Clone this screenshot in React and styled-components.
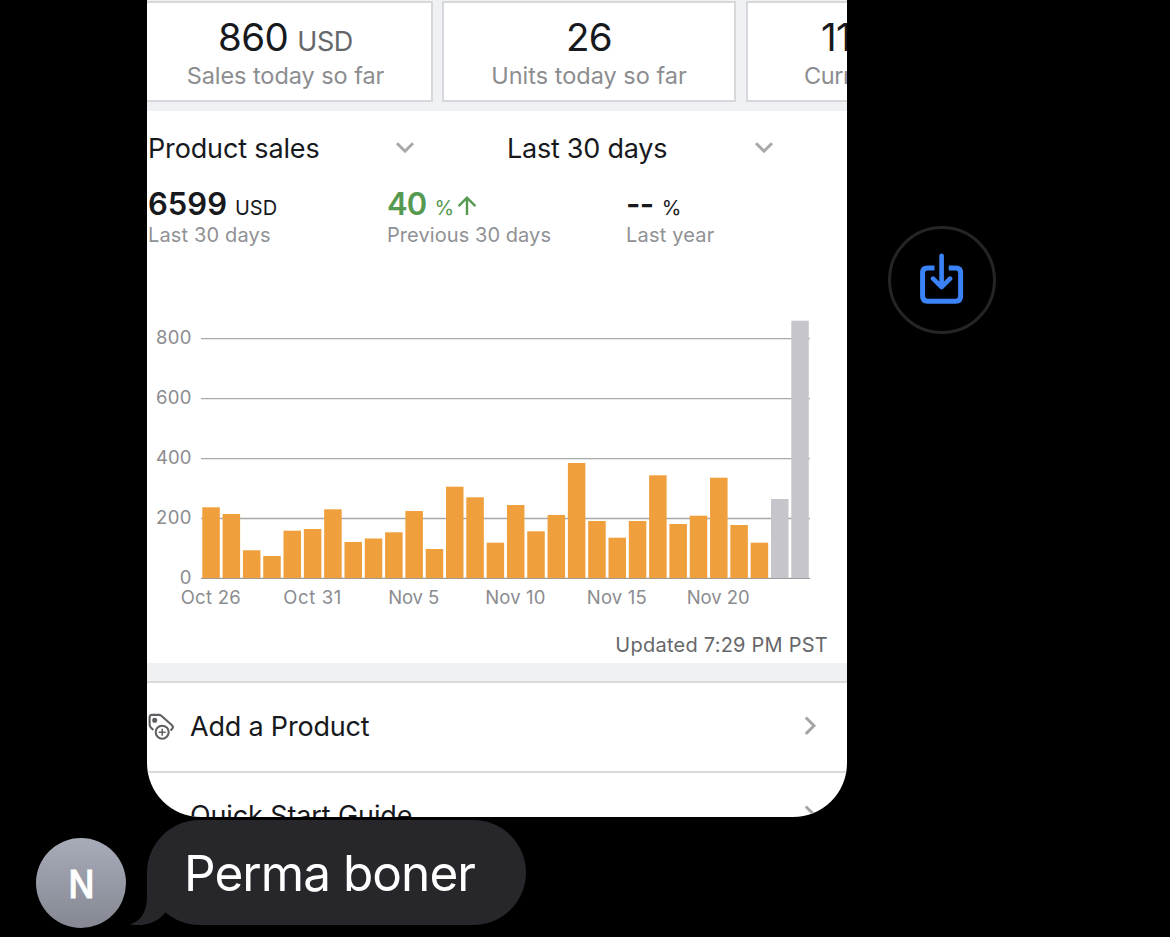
import React from "react";
import styled, { createGlobalStyle } from "styled-components";

const Global = createGlobalStyle`
  * { box-sizing: border-box; }
  html, body { margin: 0; background: #000; }
  body { font-family: Inter, "Liberation Sans", sans-serif; overflow: hidden; }
`;

const Screen = styled.main`
  width: 1170px;
  height: 937px;
  background: #000;
  overflow: hidden;
  display: flex;
  flex-direction: column;
`;

const MediaRow = styled.div`
  display: flex;
  align-items: flex-start;
  padding-left: 147px;
  height: 817px;
`;

const Attachment = styled.section`
  width: 700px;
  height: 817px;
  flex: none;
  background: #fff;
  border-radius: 0 0 54px 54px;
  overflow: hidden;
`;

const Text = styled.span`
  display: block;
  white-space: pre;
  font-size: ${(p) => p.$size}px;
  line-height: ${(p) => p.$line || 30}px;
  font-weight: ${(p) => p.$weight || 400};
  letter-spacing: ${(p) => p.$track || 0}px;
  color: ${(p) => p.$color || "#17191d"};
`;

const StatStrip = styled.div`
  display: flex;
  gap: 10px;
  height: 111px;
  padding-top: 1px;
  margin-left: -9px;
  background: #f0f1f4;
`;

const StatCard = styled.div`
  flex: none;
  width: 294px;
  height: 101px;
  border: 2px solid #d7d8da;
  background: #fff;
  padding: 14px 0 0 ${(p) => p.$indent || 0}px;
  display: flex;
  flex-direction: column;
  align-items: ${(p) => (p.$indent ? "flex-start" : "center")};

  &:first-child { width: 295px; margin-right: -1px; }
`;

const StatValue = styled.div`
  display: flex;
  align-items: baseline;
  gap: 9px;
  height: 41px;
  padding-left: ${(p) => p.$shift || 0}px;
`;

const Selectors = styled.div`
  display: flex;
  height: 74px;
  padding-top: 1px;
`;

const Selector = styled.div`
  flex: none;
  width: 359px;
  display: flex;
  align-items: center;
  justify-content: space-between;
  padding: 0 91px 0 1px;

  svg { margin-bottom: 2px; }
`;

const Metrics = styled.div`
  display: flex;
  height: 75px;
  padding-top: 4px;
`;

const Metric = styled.div`
  flex: none;
  width: 239px;
  padding-left: 1px;
`;

const MetricValue = styled.div`
  display: flex;
  align-items: baseline;
  height: 31px;
  gap: 8px;

  svg { margin-left: -5px; }
`;

const ChartBox = styled.svg`
  display: block;
  width: 700px;
  height: 350px;
  text { font-family: Inter, sans-serif; font-size: 18.5px; fill: #8b8c8f; }
`;

const Updated = styled.div`
  display: flex;
  justify-content: flex-end;
  height: 53px;
  padding: 20px 19px 0 0;
`;

const Divider = styled.div`
  height: 20px;
  background: #f0f1f3;
  border-bottom: 2px solid #d9dadb;
`;

const MenuRow = styled.div`
  display: flex;
  align-items: center;
  height: ${(p) => p.$height || 90}px;
  border-bottom: 2px solid #d9dadb;
  padding: 0 30px 0 1px;

  > svg { margin-bottom: 3px; }
`;

const MenuIcon = styled.span`
  width: 42px;
  height: 28px;
`;

const MenuLabel = styled.div`
  flex: 1;
`;

const SaveButton = styled.button`
  margin: 226px 0 0 41px;
  width: 108px;
  height: 108px;
  border: 3px solid #252526;
  border-radius: 50%;
  background: #000;
  padding: 0;
  display: flex;
  align-items: center;
  justify-content: center;
`;

const MessageRow = styled.div`
  display: flex;
  padding: 3px 0 0 36px;
`;

const Avatar = styled.div`
  width: 90px;
  height: 90px;
  margin-top: 18px;
  padding-top: 2px;
  border-radius: 50%;
  background: linear-gradient(#a8acb9, #858892);
  display: flex;
  align-items: center;
  justify-content: center;
`;

const Initial = styled(Text)`
  transform: scaleX(0.9);
  -webkit-text-stroke: 1px #fff;
`;

const Bubble = styled.div`
  position: relative;
  margin-left: 21px;
  width: 379px;
  height: 105px;
  border-radius: 52.5px;
  background: #27262b;
  padding: 0 0 0 37px;
  display: flex;
  align-items: center;
`;

const Tail = styled.svg`
  position: absolute;
  left: -17px;
  bottom: 0;
`;

const BARS = [
  507.3, 514, 550.3, 556, 530.7, 529, 509.3, 542, 538.5, 532.3, 511, 549,
  486.7, 497.3, 542.7, 505, 531.3, 515, 463, 521, 537.7, 521, 475.3, 524,
  515.7, 477.7, 525, 542.7, 499, 320.7,
];
const Y_LABELS = [[800, 338.6], [600, 398.6], [400, 458.6], [200, 518.5], [0, 578.3]];
const X_LABELS = [
  ["Oct 26", 210.7, 60], ["Oct 31", 312.2, 58], ["Nov 5", 413.7, 51],
  ["Nov 10", 515.3, 60], ["Nov 15", 616.8, 60], ["Nov 20", 718.2, 63],
];

const Chart = () => (
  <ChartBox viewBox="147 260 700 350">
    {Y_LABELS.map(([n, y]) => (
      <g key={n}>
        <line x1="201" x2="810" y1={y} y2={y} stroke="#a9a9aa" strokeWidth="1.3" />
        <text x="191.5" y={y + 5.3} textAnchor="end" textLength={n ? 35.5 : 11.5}>{n}</text>
      </g>
    ))}
    {BARS.map((y, i) => (
      <rect key={i} x={202.3 + 20.31 * i} y={y} width="17.5" height={578.3 - y}
        fill={i > 27 ? "#c6c5cb" : "#ef9f3b"} />
    ))}
    <line x1="201" x2="810" y1="578.5" y2="578.5" stroke="#9b9490" strokeOpacity="0.7" strokeWidth="1.2" />
    {X_LABELS.map(([t, x, w]) => (
      <text key={t} x={x} y="603.7" textAnchor="middle" textLength={w}>{t}</text>
    ))}
  </ChartBox>
);

const ChevronDown = () => (
  <svg width="20" height="14" viewBox="0 0 20 14" fill="none" stroke="#a8a8aa" strokeWidth="3">
    <path d="M2 2.2 10 10.2 18 2.2" />
  </svg>
);

const ChevronRight = () => (
  <svg width="14" height="20" viewBox="0 0 14 20" fill="none" stroke="#a5a5a7" strokeWidth="3">
    <path d="M2.8 1.5 11 9.7 2.8 17.9" />
  </svg>
);

const ArrowUp = () => (
  <svg width="20" height="20" viewBox="0 0 20 20" fill="none" stroke="#559a50" strokeWidth="2.4">
    <path d="M10 20V3M1.6 11.1 10 2.7l8.4 8.4" />
  </svg>
);

const TagPlus = () => (
  <svg width="27" height="28" viewBox="0 0 27 28" fill="none" stroke="#5f6063" strokeWidth="2.1">
    <path d="M5.3 17 2.6 14.2Q1.6 13 1.6 11.5V4.5Q1.6 1.9 4 1.9H11Q12.3 1.9 13.3 2.8L24 12.2Q25.6 13.8 24.4 15.4L22.6 17.6" />
    <circle cx="6.7" cy="7.2" r="1.5" fill="#5f6063" />
    <circle cx="14.2" cy="19.2" r="6.5" />
    <path d="M14.2 15.7v7M10.7 19.2h7" strokeWidth="1.5" />
  </svg>
);

const SaveIcon = () => (
  <svg width="46" height="54" viewBox="0 0 46 54" fill="none" stroke="#3b82f6" strokeWidth="5">
    <path d="M15.5 14.9H8.5Q3.6 14.9 3.6 19.8V43.3Q3.6 48.2 8.5 48.2H36.7Q41.6 48.2 41.6 43.3V19.8Q41.6 14.9 36.7 14.9H29.7" />
    <path d="M22.6 2.8V34M14.1 25.7 22.6 34.1 31.1 25.7" strokeWidth="4.6" strokeLinecap="round" strokeLinejoin="round" />
  </svg>
);

export default function App() {
  return (
    <Screen>
      <Global />
      <MediaRow>
        <Attachment>
          <StatStrip>
            <StatCard>
              <StatValue>
                <Text $size={38.5} $line={40} $track={-0.6}>860</Text>
                <Text $size={27} $line={40} $track={-0.4} $color="#66676b">USD</Text>
              </StatValue>
              <Text $size={23.5} $line={36} $track={-0.06} $color="#8c8d90">Sales today so far</Text>
            </StatCard>
            <StatCard>
              <StatValue><Text $size={38.5} $line={40} $track={-0.6}>26</Text></StatValue>
              <Text $size={23.5} $line={36} $track={0} $color="#8c8d90">Units today so far</Text>
            </StatCard>
            <StatCard $indent={56}>
              <StatValue $shift={17}><Text $size={38.5} $line={40} $track={-0.6}>11</Text></StatValue>
              <Text $size={23.5} $line={36} $track={-0.4} $color="#8c8d90">Curr</Text>
            </StatCard>
          </StatStrip>

          <Selectors>
            <Selector><Text $size={27} $track={-0.15}>Product sales</Text><ChevronDown /></Selector>
            <Selector><Text $size={27} $track={-0.25}>Last 30 days</Text><ChevronDown /></Selector>
          </Selectors>

          <Metrics>
            <Metric>
              <MetricValue>
                <Text $size={31} $weight={600}>6599</Text>
                <Text $size={20}>USD</Text>
              </MetricValue>
              <Text $size={20} $track={0.15} $color="#909194">Last 30 days</Text>
            </Metric>
            <Metric>
              <MetricValue>
                <Text $size={31} $weight={600} $track={-0.8} $color="#559a50">40</Text>
                <Text $size={20} $color="#559a50">%</Text>
                <ArrowUp />
              </MetricValue>
              <Text $size={20} $track={0.07} $color="#909194">Previous 30 days</Text>
            </Metric>
            <Metric>
              <MetricValue>
                <Text $size={31} $weight={600} $track={-0.6}>--</Text>
                <Text $size={20}>%</Text>
              </MetricValue>
              <Text $size={20} $track={0.2} $color="#909194">Last year</Text>
            </Metric>
          </Metrics>

          <Chart />

          <Updated><Text $size={20} $track={0.24} $color="#66676a">Updated 7:29 PM PST</Text></Updated>
          <Divider />
          <MenuRow>
            <MenuIcon><TagPlus /></MenuIcon>
            <MenuLabel><Text $size={27} $track={-0.2}>Add a Product</Text></MenuLabel>
            <ChevronRight />
          </MenuRow>
          <MenuRow $height={88}>
            <MenuIcon />
            <MenuLabel><Text $size={27} $track={-0.12}>Quick Start Guide</Text></MenuLabel>
            <ChevronRight />
          </MenuRow>
        </Attachment>
        <SaveButton aria-label="Save"><SaveIcon /></SaveButton>
      </MediaRow>

      <MessageRow>
        <Avatar><Initial $size={38} $line={40} $weight={500} $color="#fff">N</Initial></Avatar>
        <Bubble>
          <Tail width="42" height="53" viewBox="0 -13 42 53">
            <path d="M17 -13V11C17 27 11 36 0 39.4C13 42 27 38 35 28L42 0V-13Z" fill="#27262b" />
          </Tail>
          <Text $size={49.5} $line={60} $track={-0.95} $color="#fff">Perma boner</Text>
        </Bubble>
      </MessageRow>
    </Screen>
  );
}
